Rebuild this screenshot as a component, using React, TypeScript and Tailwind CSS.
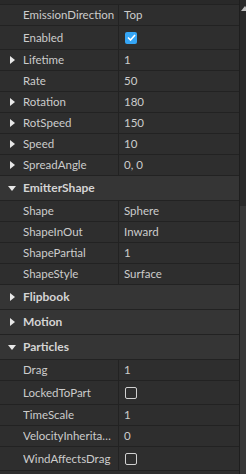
import React from 'react'

type Row =
  | { kind: 'prop'; name: string; value?: string; arrow?: boolean; check?: boolean; checked?: boolean }
  | { kind: 'group'; name: string; open: boolean }

const rows: Row[] = [
  { kind: 'prop', name: 'EmissionDirection', value: 'Top' },
  { kind: 'prop', name: 'Enabled', check: true, checked: true },
  { kind: 'prop', name: 'Lifetime', value: '1', arrow: true },
  { kind: 'prop', name: 'Rate', value: '50' },
  { kind: 'prop', name: 'Rotation', value: '180', arrow: true },
  { kind: 'prop', name: 'RotSpeed', value: '150', arrow: true },
  { kind: 'prop', name: 'Speed', value: '10', arrow: true },
  { kind: 'prop', name: 'SpreadAngle', value: '0, 0', arrow: true },
  { kind: 'group', name: 'EmitterShape', open: true },
  { kind: 'prop', name: 'Shape', value: 'Sphere' },
  { kind: 'prop', name: 'ShapeInOut', value: 'Inward' },
  { kind: 'prop', name: 'ShapePartial', value: '1' },
  { kind: 'prop', name: 'ShapeStyle', value: 'Surface' },
  { kind: 'group', name: 'Flipbook', open: false },
  { kind: 'group', name: 'Motion', open: false },
  { kind: 'group', name: 'Particles', open: true },
  { kind: 'prop', name: 'Drag', value: '1' },
  { kind: 'prop', name: 'LockedToPart', check: true },
  { kind: 'prop', name: 'TimeScale', value: '1' },
  { kind: 'prop', name: 'VelocityInheritance', value: '0' },
  { kind: 'prop', name: 'WindAffectsDrag', check: true },
]

function Caret({ open }: { open: boolean }) {
  return open ? (
    <svg width="8" height="5" viewBox="0 0 8 5" className="shrink-0">
      <path d="M0 0H8L4 5Z" fill="#e8e8e8" />
    </svg>
  ) : (
    <svg width="5" height="8" viewBox="0 0 5 8" className="shrink-0">
      <path d="M0 0L5 4L0 8Z" fill="#e8e8e8" />
    </svg>
  )
}

function Check({ checked }: { checked?: boolean }) {
  if (checked) {
    return (
      <div className="w-[12px] h-[12px] rounded-[2px] bg-[#35a5f5] flex items-center justify-center">
        <svg width="9" height="7" viewBox="0 0 9 7">
          <path d="M1 3.5L3.5 6L8 1" stroke="#ffffff" strokeWidth="1.6" fill="none" />
        </svg>
      </div>
    )
  }
  return <div className="w-[12px] h-[12px] rounded-[2px] border border-[#d0d0d0]" />
}

export default function App() {
  return (
    <div
      className="w-[246px] h-[474px] overflow-hidden bg-[#2e2e2e] flex text-[11.5px] text-[#cccccc]"
      style={{ fontFamily: 'Lato, "Open Sans", sans-serif' }}
    >
      <div className="w-[239px] shrink-0 flex flex-col">
        <div className="h-[5px] shrink-0 bg-[#292929] border-b border-[#222222]" />
        {rows.map((r) =>
          r.kind === 'group' ? (
            <div
              key={r.name}
              className="h-[25px] shrink-0 flex items-center bg-[#353535] border-b border-[#222222]"
            >
              <div className="w-[23px] flex justify-center pl-[1px]">
                <Caret open={r.open} />
              </div>
              <span className="font-bold text-[12px] text-[#d4d4d4]">{r.name}</span>
            </div>
          ) : (
            <div
              key={r.name}
              className={`${r.check ? 'h-[24px]' : 'h-[21px]'} shrink-0 flex border-b border-[#222222]`}
            >
              <div className="w-[119px] shrink-0 flex items-center border-r border-[#222222]">
                <div className="w-[23px] shrink-0 flex justify-center pl-[1px]">
                  {r.arrow && <Caret open={false} />}
                </div>
                <span className="truncate pr-[2px]">{r.name}</span>
              </div>
              <div className="flex-1 flex items-center pl-[5px]">
                {r.check ? <div className="pl-[1px]"><Check checked={r.checked} /></div> : <span>{r.value}</span>}
              </div>
            </div>
          )
        )}
      </div>
      <div className="w-[7px] shrink-0 flex flex-col border-l border-[#1e1e1e] bg-[#2a2a2a]">
        <div className="h-[16px] shrink-0 flex items-center pl-[1px]">
          <svg width="8" height="5" viewBox="0 0 8 5" className="shrink-0">
            <path d="M0 5H8L4 0Z" fill="#bdbdbd" />
          </svg>
        </div>
        <div className="flex-1 flex flex-col">
          <div className="h-[190px] shrink-0" />
          <div className="flex-1 bg-[#383838]" />
        </div>
      </div>
    </div>
  )
}
